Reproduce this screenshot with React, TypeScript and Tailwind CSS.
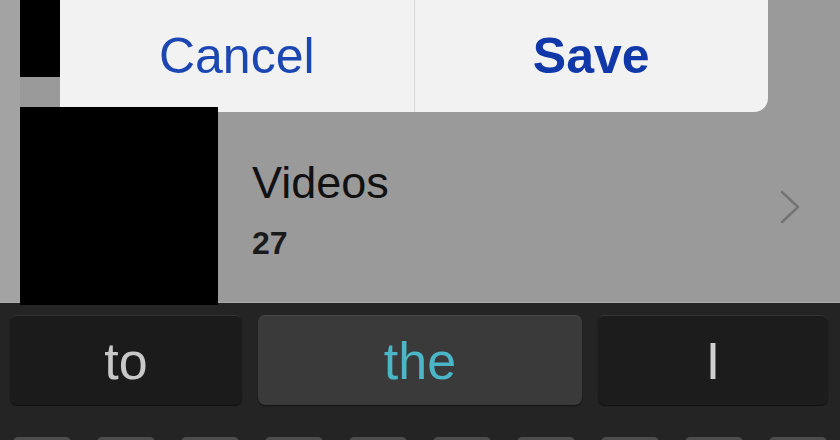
import React from "react";

const font = { fontFamily: '"Liberation Sans", Arial, sans-serif' };

function Chevron() {
  return (
    <svg width="22" height="34" viewBox="0 0 22 34" fill="none">
      <path d="M3 2 L19 17 L3 32" stroke="#747474" strokeWidth="2.5" strokeLinecap="round" strokeLinejoin="round" />
    </svg>
  );
}

export default function App() {
  const bottomKeys = Array.from({ length: 10 });

  return (
    <main className="relative h-[440px] w-[840px] overflow-hidden bg-[#242424]" style={font}>
      {/* album list under the dialog */}
      <section className="flex h-[303px] bg-[#9a9a9a] border-b border-[#aaaaaa]">
        <div className="w-[20px] shrink-0 bg-[#a3a3a3]" />
        <div className="flex flex-1 flex-col">
          <div className="h-[78px] w-[40px] bg-black" />
          <div className="mt-[30px] flex h-[195px] items-start">
            <div className="relative z-10 h-[198px] w-[198px] shrink-0 bg-black" />
            <div className="ml-[34px] flex flex-1 flex-col pt-[53px] text-[#111]">
              <span className="text-[45px] leading-[45px]">Videos</span>
              <span className="mt-[22px] text-[32px] font-semibold leading-[32px] text-[#1a1a1a]">27</span>
            </div>
            <div className="mr-[39px] mt-[83px]">
              <Chevron />
            </div>
          </div>
        </div>
      </section>

      {/* alert buttons overlay */}
      <div className="absolute left-[60px] top-0 z-0 flex h-[112px] w-[708px] rounded-br-[14px] bg-[#f2f2f2]">
        <button className="flex flex-1 items-center justify-center text-[50px] text-[#1c47b3]">Cancel</button>
        <div className="w-px bg-[#d8d8d8]" />
        <button className="flex flex-1 items-center justify-center text-[50px] font-bold text-[#1038a8]">Save</button>
      </div>

      {/* keyboard */}
      <section className="flex flex-col">
        <div className="mt-[12px] flex h-[90px] shrink-0 gap-[16px] pl-[10px] pr-[12px]">
          <div className="flex w-[232px] items-center justify-center rounded-[7px] border-t border-[#333] bg-[#1b1b1b] text-[52px] text-[#c8c8c8] shadow-[0_1px_1px_#111]">
            to
          </div>
          <div className="flex w-[324px] items-center justify-center rounded-[7px] border-t border-[#4a4a4a] bg-[#3a3a3a] text-[52px] text-[#4ab6c7] shadow-[0_1px_1px_#111]">
            the
          </div>
          <div className="flex flex-1 items-center justify-center rounded-[7px] border-t border-[#333] bg-[#1c1c1c] text-[52px] text-[#cfcfcf] shadow-[0_1px_1px_#111]">
            I
          </div>
        </div>
        <div className="mt-[32px] grid shrink-0 grid-cols-10 gap-[26px] px-[13px]">
          {bottomKeys.map((_, i) => (
            <div key={i} className="h-[6px] rounded-t-[5px] bg-[#4c4c4c]" />
          ))}
        </div>
      </section>
    </main>
  );
}
